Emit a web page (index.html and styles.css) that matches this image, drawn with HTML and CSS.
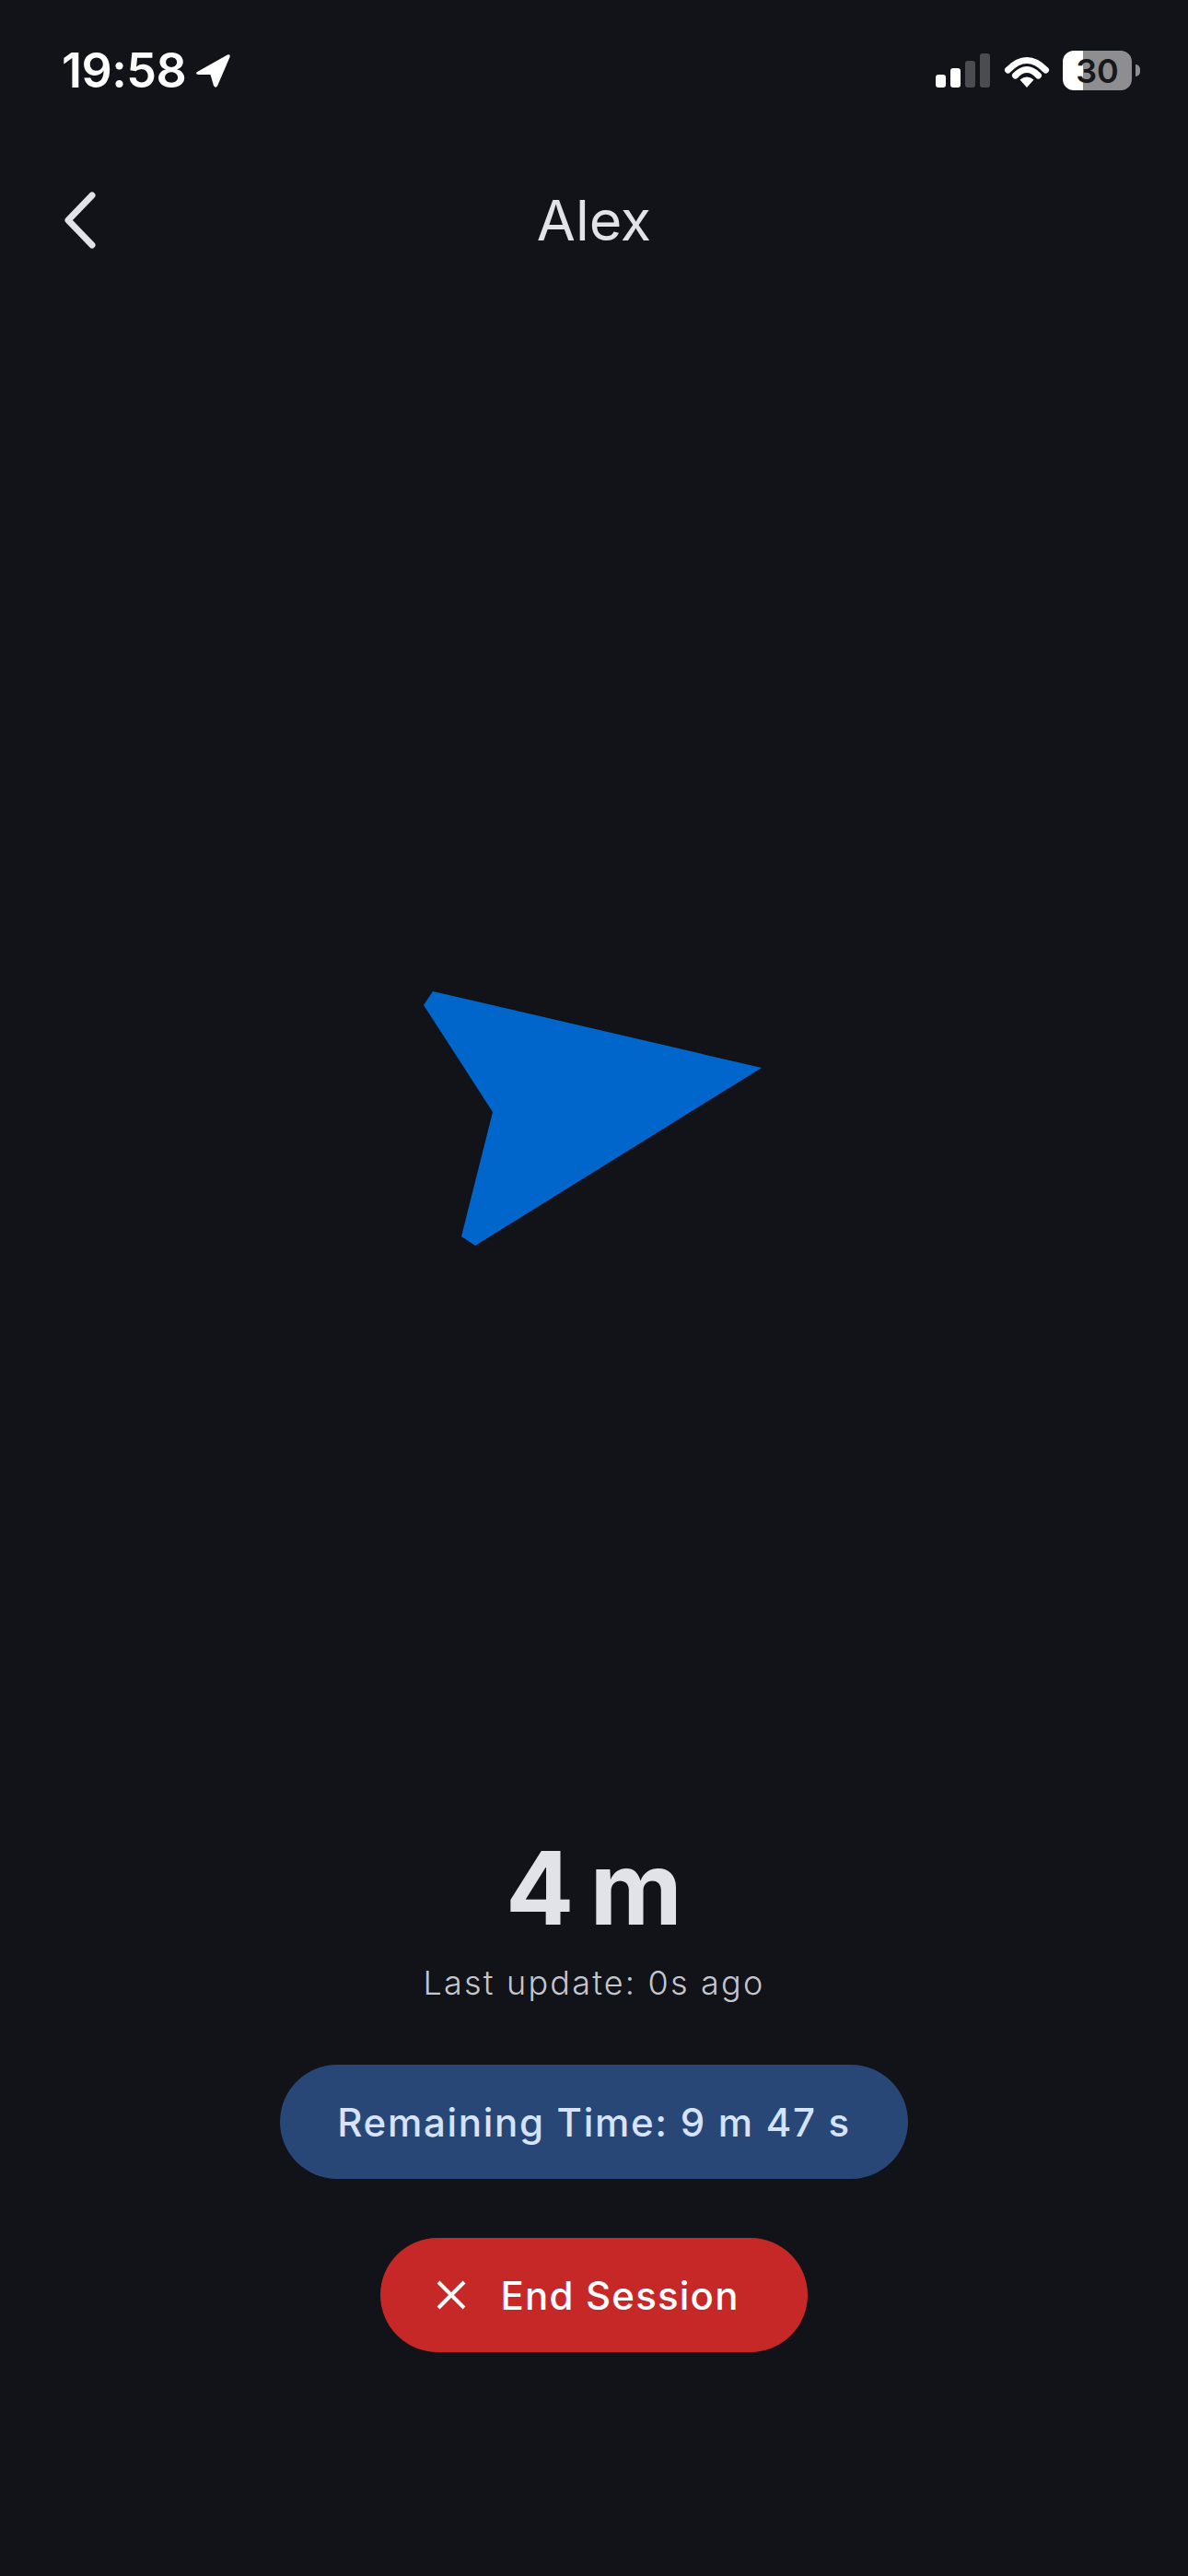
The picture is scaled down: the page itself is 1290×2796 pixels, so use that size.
FILE: index.html
```html
<!DOCTYPE html>
<html lang="en">
<head>
    <meta charset="UTF-8">
    <meta name="viewport" content="width=device-width, initial-scale=1.0">
    <title>Alex</title>
    <link rel="stylesheet" href="styles.css">
</head>
<body>
    <div class="app">
        <div class="status-bar">
            <div class="status-left">
                <span class="clock">19:58</span>
                <svg class="location" viewBox="0 0 39 38"><path d="M3 19.5 L35 1.5 Q38.5 0.5 37.5 4 L24 35.500 Q22 38 20 35 L16.500 23 L3 23 Q-1 21.500 3 19.500 Z"/></svg>
            </div>
            <div class="status-right">
                <div class="signal">
                    <span class="bar bar-1"></span>
                    <span class="bar bar-2"></span>
                    <span class="bar bar-3 off"></span>
                    <span class="bar bar-4 off"></span>
                </div>
                <svg class="wifi" viewBox="0 0 50 36">
                    <path d="M25 36 L17.500 27.500 Q25 21.500 32.500 27.500 Z"/>
                    <path d="M4.500 17 Q25 -4 45.500 17" class="arc"/>
                    <path d="M12.500 23 Q25 10 37.500 23" class="arc"/>
                </svg>
                <div class="battery"><span>30</span></div>
                <span class="battery-nub"></span>
            </div>
        </div>

        <div class="nav">
            <svg class="back" viewBox="0 0 36 62"><path d="M31 4 L5 31 L31 58"/></svg>
            <h1>Alex</h1>
        </div>

        <div class="compass">
            <svg class="arrow" viewBox="0 0 367 276"><polygon points="10,0 0,15 75,131 41,266 56,276 367,83"/></svg>
        </div>

        <div class="info">
            <div class="distance">4 m</div>
            <div class="last-update">Last update: 0s ago</div>
            <div class="pill remaining">Remaining Time: 9 m 47 s</div>
            <button class="pill end-session">
                <svg class="close" viewBox="0 0 34 34"><path d="M3 3 L31 31 M31 3 L3 31"/></svg>
                End Session
            </button>
        </div>
    </div>
</body>
</html>
```

FILE: styles.css
```css
body {
    margin: 0;
    background-color: #111318;
    font-family: Inter, "Liberation Sans", sans-serif;
}
.app {
    height: 2796px;
    display: flex;
    flex-direction: column;
    overflow: hidden;
}

.status-bar {
    height: 43px;
    padding: 55px 52px 0 67px;
    display: flex;
    justify-content: space-between;
    align-items: center;
    color: #fff;
}
.status-left,
.status-right {
    display: flex;
    align-items: center;
}
.clock {
    font-size: 52px;
    font-weight: 600;
    line-height: 43px;
    letter-spacing: -0.500px;
}
.location {
    width: 39px;
    height: 38px;
    margin-left: 10px;
    fill: #fff;
}
.signal {
    display: flex;
    align-items: flex-end;
    gap: 5px;
    height: 37px;
}
.bar {
    width: 11px;
    border-radius: 3px;
    background-color: #fff;
}
.bar-1 { height: 14px; }
.bar-2 { height: 21px; }
.bar-3 { height: 29px; }
.bar-4 { height: 37px; }
.bar.off { background-color: #4b4c50; }
.wifi {
    width: 50px;
    height: 36px;
    margin-left: 15px;
    fill: #fff;
}
.wifi .arc {
    fill: none;
    stroke: #fff;
    stroke-width: 7px;
    stroke-linecap: round;
}
.battery {
    width: 75px;
    height: 43px;
    margin-left: 14px;
    border-radius: 12px;
    display: flex;
    align-items: center;
    justify-content: center;
    background: linear-gradient(90deg, #fff 30%, #8e8e90 30%);
    color: #17181c;
    font-size: 36px;
    font-weight: 600;
}
.battery-nub {
    width: 5px;
    height: 13px;
    margin-left: 4px;
    border-radius: 0 7px 7px 0;
    background-color: #8e8e90;
}

.nav {
    height: 70px;
    margin-top: 106px;
    padding-left: 69px;
    position: relative;
    display: flex;
    align-items: center;
}
.back {
    width: 36px;
    height: 62px;
    fill: none;
    stroke: #e2e2e9;
    stroke-width: 7px;
    stroke-linecap: round;
    stroke-linejoin: round;
}
.nav h1 {
    position: absolute;
    left: 0;
    right: 0;
    margin: 0;
    text-align: center;
    font-size: 61px;
    font-weight: 400;
    color: #e2e2e9;
}

.compass {
    flex: 1;
    display: flex;
    align-items: flex-start;
    justify-content: center;
    padding-top: 802px;
    padding-right: 3px;
}
.arrow {
    width: 367px;
    height: 276px;
    fill: #0066cc;
}

.info {
    display: flex;
    flex-direction: column;
    align-items: center;
    padding-bottom: 243px;
    color: #e2e2e9;
}
.distance {
    font-size: 110px;
    font-weight: 700;
    line-height: 120px;
    word-spacing: -9px;
}
.last-update {
    margin-top: 21px;
    font-size: 36px;
    font-weight: 300;
    line-height: 44px;
    letter-spacing: 2.200px;
    color: #c4c6d0;
}
.pill {
    height: 124px;
    border: none;
    border-radius: 62px;
    display: flex;
    align-items: center;
    justify-content: center;
    box-sizing: border-box;
    font-family: inherit;
    font-size: 42px;
    font-weight: 500;
}
.remaining {
    width: 682px;
    margin-top: 67px;
    letter-spacing: 1.700px;
    background-color: #284777;
    color: #d6e3ff;
}
.end-session {
    width: 464px;
    margin-top: 64px;
    padding-right: 20px;
    gap: 36px;
    letter-spacing: 1.200px;
    background-color: #c62828;
    color: #fff;
}
.close {
    width: 34px;
    height: 34px;
    fill: none;
    stroke: #fff;
    stroke-width: 4px;
}
```
